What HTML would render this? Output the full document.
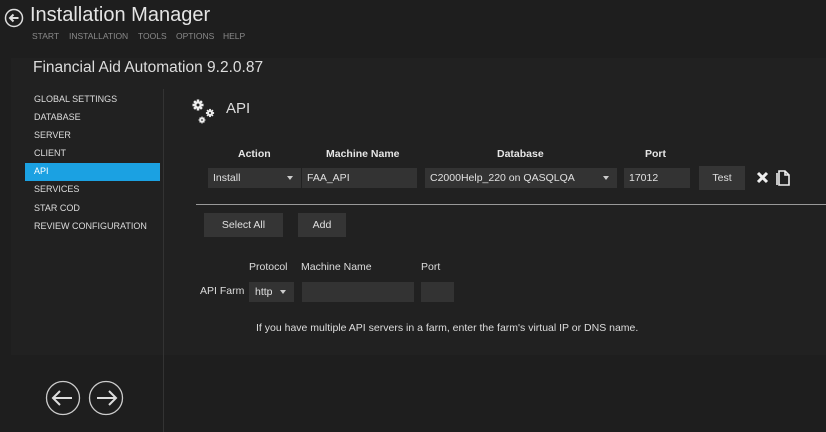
<!DOCTYPE html>
<html><head><meta charset="utf-8"><style>
*{margin:0;padding:0;box-sizing:border-box}
body{width:826px;height:432px;background:#1e1e1e;font-family:"Liberation Sans",sans-serif;color:#ddd;position:relative;overflow:hidden}
.a{position:absolute;white-space:nowrap}
.panel{position:absolute;left:11px;top:58px;width:815px;height:297px;background:#212121}
.menu{font-size:8.5px;color:#8a8a8a;top:31px}
.nav{left:34px;font-size:9px;color:#ddd}
.hdr{font-size:10.5px;font-weight:bold;color:#e6e6e6;top:148px}
.inp{position:absolute;background:#333;height:20px;font-size:10.5px;color:#e0e0e0;padding:4px 5px;white-space:nowrap}
.btn{position:absolute;background:#353535;height:24px;font-size:10.5px;color:#e0e0e0;text-align:center;line-height:24px}
.arr{position:absolute;right:8px;top:8px;border-left:3px solid transparent;border-right:3px solid transparent;border-top:4px solid #ccc}
.lbl{font-size:10.5px;color:#ddd}
</style></head><body>
<div class="panel"></div>
<svg class="a" style="left:4px;top:8px" width="20" height="20" viewBox="0 0 20 20"><circle cx="10" cy="10" r="8.5" fill="none" stroke="#ddd" stroke-width="1.5"/><path d="M14.5 10H6M9.5 6.5L6 10l3.5 3.5" fill="none" stroke="#ddd" stroke-width="2"/></svg>
<div class="a" style="left:30px;top:4px;font-size:20px;color:#e4e4e4">Installation Manager</div>
<div class="a menu" style="left:32px">START</div>
<div class="a menu" style="left:69px">INSTALLATION</div>
<div class="a menu" style="left:138px">TOOLS</div>
<div class="a menu" style="left:176px">OPTIONS</div>
<div class="a menu" style="left:223px">HELP</div>
<div class="a" style="left:33px;top:59px;font-size:15.5px;color:#ddd">Financial Aid Automation 9.2.0.87</div>
<div class="a" style="left:163px;top:89px;width:1px;height:343px;background:#333"></div>
<div class="a nav" style="top:94px">GLOBAL SETTINGS</div>
<div class="a nav" style="top:112px">DATABASE</div>
<div class="a nav" style="top:130px">SERVER</div>
<div class="a nav" style="top:148px">CLIENT</div>
<div class="a" style="left:25px;top:163px;width:135px;height:18px;background:#1ba1e2"></div>
<div class="a nav" style="top:166px;color:#fff">API</div>
<div class="a nav" style="top:184px">SERVICES</div>
<div class="a nav" style="top:203px">STAR COD</div>
<div class="a nav" style="top:221px">REVIEW CONFIGURATION</div>
<svg class="a" style="left:190px;top:98px" width="28" height="28" viewBox="0 0 28 28" fill="#eee">
<defs><g id="g"><circle r="3.3"/><rect x="-1.1" y="-4.8" width="2.2" height="9.6"/><rect x="-1.1" y="-4.8" width="2.2" height="9.6" transform="rotate(45)"/><rect x="-1.1" y="-4.8" width="2.2" height="9.6" transform="rotate(90)"/><rect x="-1.1" y="-4.8" width="2.2" height="9.6" transform="rotate(135)"/></g></defs>
<g transform="translate(8,7) scale(1.15)"><use href="#g"/><circle r="1.3" fill="#222"/></g>
<g transform="translate(20,15) scale(0.85)"><use href="#g"/><circle r="1.2" fill="#222"/></g>
<g transform="translate(12,22) scale(0.7)"><use href="#g"/><circle r="1.2" fill="#222"/></g>
</svg>
<div class="a" style="left:226px;top:100px;font-size:15px;color:#ddd">API</div>
<div class="a hdr" style="left:238px">Action</div>
<div class="a hdr" style="left:326px">Machine Name</div>
<div class="a hdr" style="left:497px">Database</div>
<div class="a hdr" style="left:645px">Port</div>
<div class="inp" style="left:208px;top:168px;width:93px">Install<span class="arr"></span></div>
<div class="inp" style="left:302px;top:168px;width:115px">FAA_API</div>
<div class="inp" style="left:425px;top:168px;width:192px">C2000Help_220 on QASQLQA<span class="arr"></span></div>
<div class="inp" style="left:624px;top:168px;width:66px">17012</div>
<div class="btn" style="left:699px;top:166px;width:46px">Test</div>
<svg class="a" style="left:756px;top:171px" width="13" height="13" viewBox="0 0 13 13"><path d="M2 2l9 9M11 2l-9 9" stroke="#eee" stroke-width="3"/></svg>
<svg class="a" style="left:776px;top:170px" width="14" height="16" viewBox="0 0 14 16"><path d="M3 1h6l4 4v10H3z M9 1v4h4 M1 3v12" fill="none" stroke="#eee" stroke-width="1.6"/></svg>
<div class="a" style="left:196px;top:204px;width:630px;height:1px;background:#999"></div>
<div class="btn" style="left:204px;top:213px;width:79px">Select All</div>
<div class="btn" style="left:298px;top:213px;width:48px">Add</div>
<div class="a lbl" style="left:249px;top:261px">Protocol</div>
<div class="a lbl" style="left:301px;top:261px">Machine Name</div>
<div class="a lbl" style="left:421px;top:261px">Port</div>
<div class="a lbl" style="left:200px;top:285px">API Farm</div>
<div class="inp" style="left:249px;top:282px;width:45px;padding-left:6px">http<span class="arr"></span></div>
<div class="inp" style="left:302px;top:282px;width:112px"></div>
<div class="inp" style="left:421px;top:282px;width:33px"></div>
<div class="a lbl" style="left:256px;top:322px">If you have multiple API servers in a farm, enter the farm's virtual IP or DNS name.</div>
<svg class="a" style="left:44px;top:380px" width="82" height="36" viewBox="0 0 82 36"><circle cx="19" cy="18" r="16.5" fill="none" stroke="#ccc" stroke-width="1.3"/><path d="M28 18H10M16 11l-7 7 7 7" fill="none" stroke="#ddd" stroke-width="2"/><circle cx="62" cy="18" r="16.5" fill="none" stroke="#ccc" stroke-width="1.3"/><path d="M53 18h18M65 11l7 7-7 7" fill="none" stroke="#ddd" stroke-width="2"/></svg>
</body></html>
